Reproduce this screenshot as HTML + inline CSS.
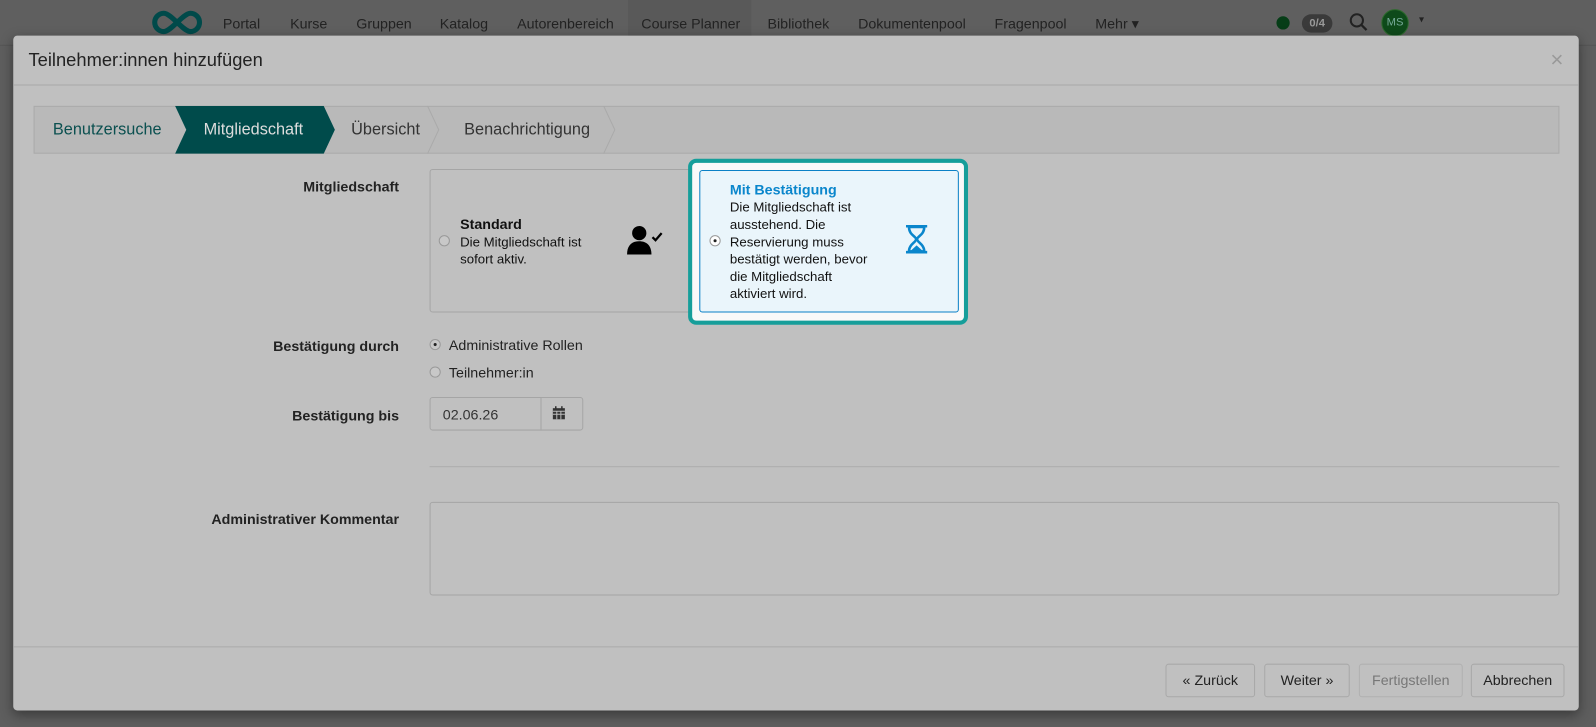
<!DOCTYPE html>
<html style="background:#5e5e5e"><head><meta charset="utf-8"><style>
*{box-sizing:border-box;margin:0;padding:0}
html,body{background:#5e5e5e}
body{width:1596px;height:727px;font-family:"Liberation Sans",Arial,sans-serif;position:relative;overflow:hidden;color:#222}
#w{position:absolute;left:0;top:0;width:1568px;height:714px;transform:scale(1.0179);transform-origin:0 0;background:#5e5e5e}
.nav{position:absolute;top:0;left:0;width:1568px;height:45px;background:#5f5f5f;border-bottom:1px solid #555}
.nav span{position:absolute;top:15px;font-size:14px;color:#222}
.cp{position:absolute;left:617px;top:0;width:121px;height:45px;background:#595959}
.dlg{position:absolute;left:13px;top:35px;width:1538px;height:663px;background:#c0c0c0;border-radius:4px;box-shadow:0 4px 12px rgba(0,0,0,.4)}
.a{position:absolute}
.lbl{position:absolute;font-size:14px;font-weight:bold;color:#222;text-align:right;width:300px;left:79px}
.radio{position:absolute;width:11px;height:11px;border:1px solid #999;border-radius:50%;background:#c8c8c8}
.radio.on::after{content:"";position:absolute;left:3px;top:3px;width:3px;height:3px;border-radius:50%;background:#222}
.btn{position:absolute;top:652px;height:33px;border:1px solid #a8a8a8;border-radius:3px;font-size:14px;text-align:center;line-height:31px;color:#222}
</style></head><body>
<div id="w">
<div class="nav">
<svg class="a" style="left:148px;top:9px" width="52" height="26" viewBox="0 0 52 26"><path d="M13 4a9 9 0 1 0 0 18c7 0 19-18 26-18a9 9 0 1 1 0 18c-7 0-19-18-26-18z" fill="none" stroke="#004a4a" stroke-width="5"/></svg>
<div class="cp"></div>
<span style="left:219px">Portal</span><span style="left:285px">Kurse</span><span style="left:350px">Gruppen</span><span style="left:432px">Katalog</span><span style="left:508px">Autorenbereich</span><span style="left:630px">Course Planner</span><span style="left:754px">Bibliothek</span><span style="left:843px">Dokumentenpool</span><span style="left:977px">Fragenpool</span><span style="left:1076px">Mehr ▾</span>
<div class="a" style="left:1254px;top:16px;width:13px;height:13px;border-radius:50%;background:#063d17"></div>
<div class="a" style="left:1279px;top:14px;width:30px;height:18px;border-radius:9px;background:#3a3a3a;color:#999;font-size:11px;font-weight:bold;text-align:center;line-height:18px">0/4</div>
<svg class="a" style="left:1325px;top:12px" width="20" height="20"><circle cx="8" cy="8" r="6" fill="none" stroke="#222" stroke-width="2"/><path d="M12.5 12.5l5 5" stroke="#222" stroke-width="2.2"/></svg>
<div class="a" style="left:1357px;top:9px;width:27px;height:27px;border-radius:50%;background:#0e4a1a;border:1px solid #2d6a2d;color:#7a9;font-size:11px;text-align:center;line-height:25px">MS</div>
<span style="left:1394px;top:14px;font-size:10px">▾</span>
</div>
<div class="dlg">
<div class="a" style="left:15px;top:14px;font-size:18px;color:#222">Teilnehmer:innen hinzufügen</div>
<div class="a" style="right:15px;top:11px;font-size:22px;color:#999">×</div>
<div class="a" style="left:0;top:48px;width:1538px;height:1px;background:#aaa"></div>
<div class="a" style="left:20px;top:69px;width:1499px;height:47px;border:1px solid #aaa;background:#b9b9b9"></div>
<svg class="a" style="left:20px;top:69px" width="600" height="47"><polygon points="139,0 285,0 296,23.5 285,47 139,47 150,23.5" fill="#004b4b"/><polyline points="387,0 398,23.5 387,47" fill="none" stroke="#aaa"/><polyline points="560,0 571,23.5 560,47" fill="none" stroke="#aaa"/></svg>
<div class="a" style="left:39px;top:84px;font-size:16px;color:#0b5050">Benutzersuche</div>
<div class="a" style="left:187px;top:84px;font-size:16px;color:#ddd">Mitgliedschaft</div>
<div class="a" style="left:332px;top:84px;font-size:16px;color:#333">Übersicht</div>
<div class="a" style="left:443px;top:84px;font-size:16px;color:#333">Benachrichtigung</div>

<div class="lbl" style="top:140px">Mitgliedschaft</div>
<div class="a" style="left:409px;top:131px;width:280px;height:141px;border:1px solid #a5a5a5;border-radius:3px"></div>
<div class="radio" style="left:418px;top:196px"></div>
<div class="a" style="left:439px;top:177px;font-size:13px;line-height:17px;color:#111"><b style="font-size:14px">Standard</b><br>Die Mitgliedschaft ist<br>sofort aktiv.</div>
<svg class="a" style="left:603px;top:186px" width="36" height="30" viewBox="0 0 36 30"><circle cx="12" cy="8" r="7" fill="#000"/><path d="M0 29c0-9 5-13 12-13s12 4 12 13z" fill="#000"/><path d="M25 12l3 3 6-7" fill="none" stroke="#000" stroke-width="2.2"/></svg>
<div class="a" style="left:663px;top:121px;width:275px;height:163px;border:4px solid #169e9a;border-radius:8px;background:#f9f9f9"></div>
<div class="a" style="left:674px;top:132px;width:255px;height:140px;border:1px solid #0a80c6;border-radius:3px;background:#eaf5fb"></div>
<div class="radio on" style="left:684px;top:196px;background:#fff"></div>
<div class="a" style="left:704px;top:143px;font-size:13px;line-height:17px;color:#111"><b style="font-size:14px;color:#0a86cc">Mit Bestätigung</b><br>Die Mitgliedschaft ist<br>ausstehend. Die<br>Reservierung muss<br>bestätigt werden, bevor<br>die Mitgliedschaft<br>aktiviert wird.</div>
<svg class="a" style="left:877px;top:186px" width="21" height="28" viewBox="0 0 21 28"><path d="M0 1h21M0 27h21" stroke="#0a86cc" stroke-width="3"/><path d="M3 2c0 8 7 9 7 12S3 19 3 26h15c0-7-7-9-7-12s7-4 7-12z" fill="none" stroke="#0a86cc" stroke-width="2.5"/><path d="M4 26l6.5-6 6.5 6z" fill="#0a86cc"/></svg>

<div class="lbl" style="top:297px">Bestätigung durch</div>
<div class="radio on" style="left:409px;top:298px"></div>
<div class="a" style="left:428px;top:296px;font-size:14px">Administrative Rollen</div>
<div class="radio" style="left:409px;top:325px"></div>
<div class="a" style="left:428px;top:323px;font-size:14px">Teilnehmer:in</div>

<div class="lbl" style="top:365px">Bestätigung bis</div>
<div class="a" style="left:409px;top:355px;width:151px;height:33px;border:1px solid #a5a5a5;border-radius:3px"></div>
<div class="a" style="left:518px;top:355px;width:1px;height:33px;background:#a5a5a5"></div>
<div class="a" style="left:422px;top:364px;font-size:14px;color:#333">02.06.26</div>
<svg class="a" style="left:530px;top:364px" width="12" height="13"><rect x="0" y="2" width="12" height="11" fill="#333"/><path d="M0 5h12M0 8h12M4 5v8M8 5v8" stroke="#bbb" stroke-width="1"/><path d="M3 0v3M9 0v3" stroke="#333" stroke-width="1.5"/></svg>

<div class="a" style="left:409px;top:423px;width:1110px;height:1px;background:#adadad"></div>
<div class="lbl" style="top:467px">Administrativer Kommentar</div>
<div class="a" style="left:409px;top:458px;width:1110px;height:92px;border:1px solid #a5a5a5;border-radius:3px"></div>

<div class="a" style="left:0;top:600px;width:1538px;height:1px;background:#aaa"></div>
</div>
<div class="btn" style="left:1145px;width:88px">« Zurück</div>
<div class="btn" style="left:1242px;width:84px">Weiter »</div>
<div class="btn" style="left:1335px;width:102px;color:#777;border-color:#b0b0b0">Fertigstellen</div>
<div class="btn" style="left:1445px;width:92px">Abbrechen</div>
</div>
</body></html>
